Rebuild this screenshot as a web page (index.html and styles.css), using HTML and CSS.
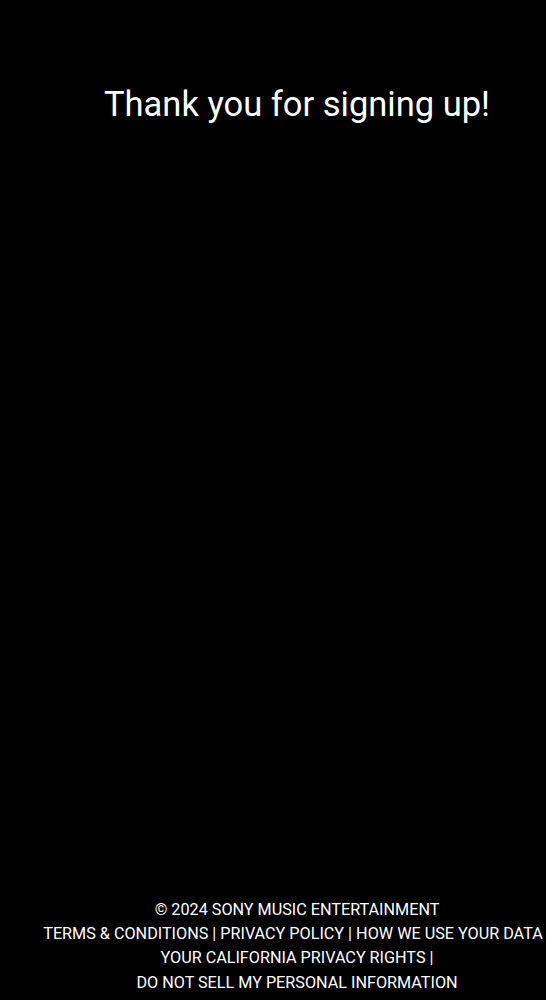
FILE: index.html
```html
<!DOCTYPE html>
<html lang="en">
<head>
<meta charset="utf-8">
<title>Thank you</title>
<link rel="stylesheet" href="styles.css">
</head>
<body>
<div class="page">
  <main class="main">
    <h1 class="title">Thank you for signing up!</h1>
  </main>
  <footer class="footer">
    <p class="line">© 2024 SONY MUSIC ENTERTAINMENT</p>
    <p class="line line-wide"><a href="#">TERMS &amp; CONDITIONS</a> | <a href="#">PRIVACY POLICY</a> | <a href="#">HOW WE USE YOUR DATA</a></p>
    <p class="line"><a href="#">YOUR CALIFORNIA PRIVACY RIGHTS</a> |</p>
    <p class="line"><a href="#">DO NOT SELL MY PERSONAL INFORMATION</a></p>
  </footer>
</div>
</body>
</html>
```
FILE: styles.css
```css
html, body {
  margin: 0;
  padding: 0;
  background: #000;
  color: #fff;
  font-family: Roboto, "Liberation Sans", sans-serif;
}
.page {
  min-height: 1000px;
  display: flex;
  flex-direction: column;
  padding-left: 48px;
  box-sizing: border-box;
}
.main {
  display: flex;
  justify-content: center;
}
.title {
  margin: 84px 0 0;
  font-size: 34.5px;
  font-weight: 400;
  line-height: 40px;
  white-space: nowrap;
}
.footer {
  margin-top: auto;
  padding-bottom: 5px;
  display: flex;
  flex-direction: column;
  align-items: center;
}
.line {
  margin: 0;
  font-size: 16.2px;
  line-height: 24.3px;
  white-space: nowrap;
}
.line-wide {
  margin-right: 8px;
}
.line a {
  color: #fff;
  text-decoration: none;
}
```
